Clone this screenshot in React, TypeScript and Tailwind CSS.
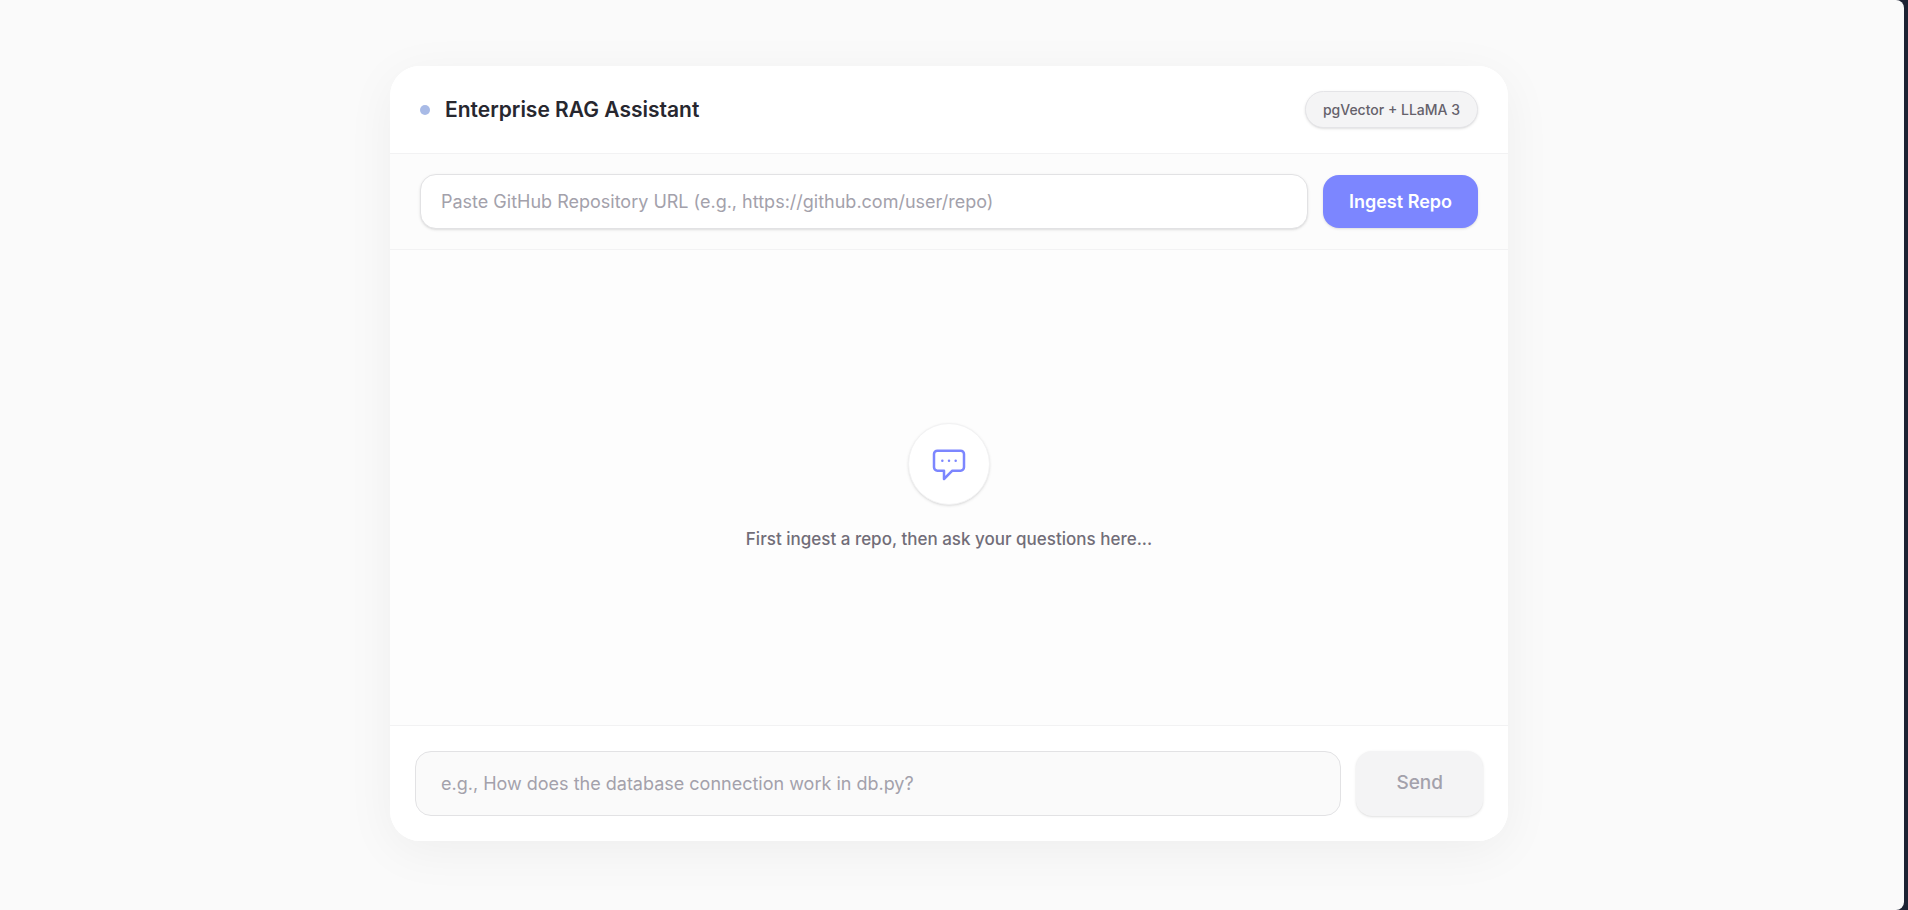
import React, { useState } from 'react';

const ChatIcon = () => (
  <svg
    className="h-10 w-10 text-[#7c86ff]"
    viewBox="0 0 24 24"
    fill="none"
    stroke="currentColor"
    strokeWidth={1.5}
    strokeLinecap="round"
    strokeLinejoin="round"
    aria-hidden="true">
    <path d="M8 10h.01M12 10h.01M16 10h.01M9 16H5a2 2 0 01-2-2V6a2 2 0 012-2h14a2 2 0 012 2v8a2 2 0 01-2 2h-5l-5 5v-5z" />
  </svg>
);

const Header = () => (
  <header className="flex items-center justify-between border-b border-[#f2f2f3] bg-white px-[30px] py-[25px]">
    <div className="flex items-center gap-[15px]">
      <span className="h-[10px] w-[10px] rounded-full bg-[#a8bae6]" />
      <h1 className="text-[21px] leading-7 font-semibold text-[#27272f]">Enterprise RAG Assistant</h1>
    </div>
    <span className="rounded-full border border-[#e4e4e7] bg-[#f4f4f5] px-[17px] py-2 text-[14px] leading-[19px] font-medium text-[#65616b] shadow-sm">
      pgVector + LLaMA 3
    </span>
  </header>
);

const IngestBar = () => {
  const [repoUrl, setRepoUrl] = useState('');

  return (
    <form
      className="flex items-center gap-[15px] border-b border-[#f2f2f3] bg-[#fcfcfc] px-[30px] py-5"
      onSubmit={(e) => e.preventDefault()}>
      <input
        type="text"
        aria-label="GitHub repository URL"
        value={repoUrl}
        onChange={(e) => setRepoUrl(e.target.value)}
        placeholder="Paste GitHub Repository URL (e.g., https://github.com/user/repo)"
        className="h-[55px] min-w-0 flex-1 rounded-2xl border border-[#e2e2e4] bg-white px-5 text-[18px] text-[#27272f] shadow-sm outline-none placeholder:text-[#a3a1ab]"
      />
      <button
        type="submit"
        className="h-[53px] rounded-2xl bg-[#7c86ff] px-[26px] text-[18px] font-semibold text-white shadow-sm">
        Ingest Repo
      </button>
    </form>
  );
};

const EmptyChat = () => (
  <section className="flex flex-1 flex-col items-center justify-center gap-5 bg-[#fdfdfd]">
    <div className="flex h-[82px] w-[82px] items-center justify-center rounded-full border border-[#f2f2f3] bg-white shadow-sm">
      <ChatIcon />
    </div>
    <p className="text-[17px] leading-7 font-medium text-[#716d78]">
      First ingest a repo, then ask your questions here...
    </p>
  </section>
);

const MessageBar = () => {
  const [message, setMessage] = useState('');

  return (
    <form
      className="flex items-center gap-[15px] border-t border-[#f2f2f3] bg-white p-[25px]"
      onSubmit={(e) => e.preventDefault()}>
      <input
        type="text"
        aria-label="Question"
        value={message}
        onChange={(e) => setMessage(e.target.value)}
        placeholder="e.g., How does the database connection work in db.py?"
        className="h-[65px] min-w-0 flex-1 rounded-2xl border border-[#e2e2e4] bg-[#fafafa] px-[25px] text-[18px] text-[#27272f] outline-none placeholder:text-[#a3a1ab]"
      />
      <button
        type="submit"
        disabled={!message}
        className="h-[65px] rounded-2xl bg-[#f4f4f5] px-10 text-[19px] font-medium text-[#a3a1ab] shadow-sm">
        Send
      </button>
    </form>
  );
};

const App = () => {
  return (
    <div className="h-screen bg-[#1d2233] pr-1 font-['Inter',sans-serif]">
      <main className="flex h-full justify-center rounded-r-lg bg-[#fafafa] pt-[66px] pr-1.5 pb-[69px]">
        <div className="flex h-full w-full max-w-[1118px] flex-col overflow-hidden rounded-[30px] bg-white shadow-[0_10px_50px_rgba(0,0,0,0.05)]">
          <Header />
          <IngestBar />
          <EmptyChat />
          <MessageBar />
        </div>
      </main>
    </div>
  );
};

export default App;
